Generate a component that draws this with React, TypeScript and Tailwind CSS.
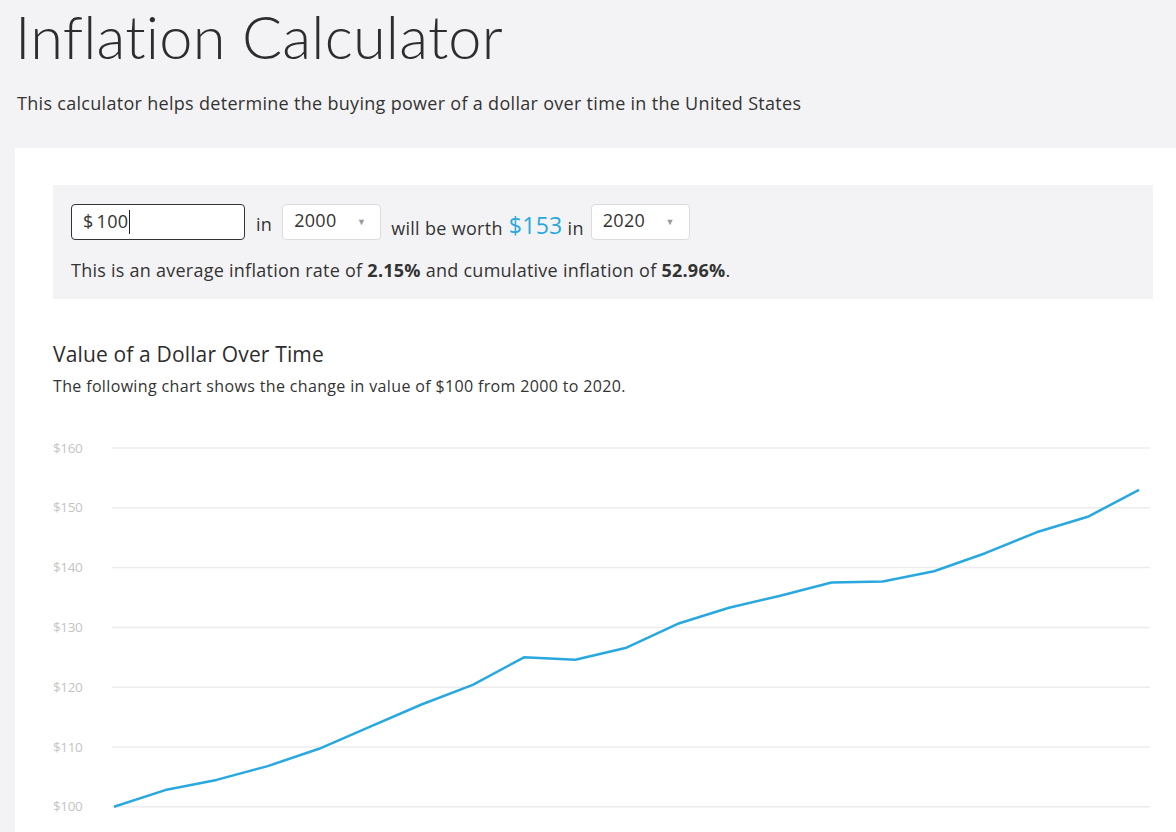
import * as React from 'react'

const values = [
  100, 102.8, 104.5, 106.8, 109.7, 113.4, 117.1, 120.4, 125.0, 124.6, 126.6, 130.6, 133.3, 135.3, 137.5,
  137.7, 139.4, 142.4, 145.9, 148.5, 153.0,
]

function YearSelect({ value }: { value: string }) {
  return (
    <div className="flex h-[36px] w-[99px] items-center justify-between rounded-[4px] border border-[#dcdcdc] bg-white pl-[11px] pr-[14px] text-[18px] tracking-[0.3px] text-[#333]">
      <span className="-mt-[3px]">{value}</span>
      <span className="text-[9px] text-[#999]">▼</span>
    </div>
  )
}

function Chart() {
  const top = 17
  const step = 59.8
  const ticks = [160, 150, 140, 130, 120, 110, 100]
  const yFor = (v: number) => top + (160 - v) * (step / 10)
  const pts = values.map((v, i) => `${61 + i * 51.25},${yFor(v).toFixed(1)}`).join(' ')

  return (
    <svg width="1100" height="402" className="mt-[35px] block">
      {ticks.map((t, i) => (
        <g key={t}>
          <line x1="59" x2="1097" y1={top + i * step} y2={top + i * step} stroke="#ececec" strokeWidth="1.5" />
          <text x="0" y={top + i * step + 4.5} fontSize="13.5" fill="#c4c4c4" fontFamily="'Open Sans', sans-serif" letterSpacing="-0.4">
            ${t}
          </text>
        </g>
      ))}
      <polyline points={pts} fill="none" stroke="#29a8e0" strokeWidth="2.5" strokeLinejoin="round" />
    </svg>
  )
}

export default function App() {
  return (
    <div className="min-h-[832px] overflow-hidden bg-[#f3f3f5] font-['Open_Sans',sans-serif] text-[#333]">
      <div className="px-[15px]">
        <h1 className="pt-[1px] font-['Lato',sans-serif] text-[59.5px] font-light leading-[70px] tracking-[0.2px] text-[#2d2d2d]">
          Inflation Calculator
        </h1>
        <p className="mt-[20px] pl-[2px] text-[18px] leading-[24px] tracking-[0.3px]">
          This calculator helps determine the buying power of a dollar over time in the United States
        </p>
      </div>

      <div className="ml-[15px] mt-[33px] bg-white pl-[38px] pr-[23px] pt-[37px]">
        <div className="w-[1100px] bg-[#f3f3f5] px-[18px] pb-[17px] pt-[19px]">
          <div className="flex items-start tracking-[0.3px]">
            <div className="flex h-[36px] w-[174px] items-center rounded-[4px] border border-[#333] bg-white pl-[11px] text-[18px]">
              <span className="-mt-[2px]">$</span>
              <span className="-mt-[2px] ml-[3px]">100</span>
              <span className="ml-[1px] h-[24px] w-px bg-[#222]" />
            </div>
            <span className="ml-[11px] mt-[7px] text-[18px]">in</span>
            <div className="ml-[10px]">
              <YearSelect value="2000" />
            </div>
            <span className="ml-[10px] mt-[12px] text-[18px] leading-[24px]">will be worth</span>
            <span className="ml-[6px] mt-[6px] text-[23px] leading-[30px] text-[#29a8e0]">$153</span>
            <span className="ml-[5px] mt-[12px] text-[18px] leading-[24px]">in</span>
            <div className="ml-[7px]">
              <YearSelect value="2020" />
            </div>
          </div>
          <p className="mt-[18px] text-[18px] leading-[24px] tracking-[0.25px]">
            This is an average inflation rate of <strong className="font-bold">2.15%</strong> and cumulative inflation
            of <strong className="font-bold">52.96%</strong>.
          </p>
        </div>

        <h2 className="mt-[41px] text-[21px] leading-[28px] tracking-[0.15px] text-[#2d2d2d]">Value of a Dollar Over Time</h2>
        <p className="mt-[8px] text-[16px] leading-[20px] tracking-[0.35px]">
          The following chart shows the change in value of $100 from 2000 to 2020.
        </p>
        <Chart />
      </div>
    </div>
  )
}
